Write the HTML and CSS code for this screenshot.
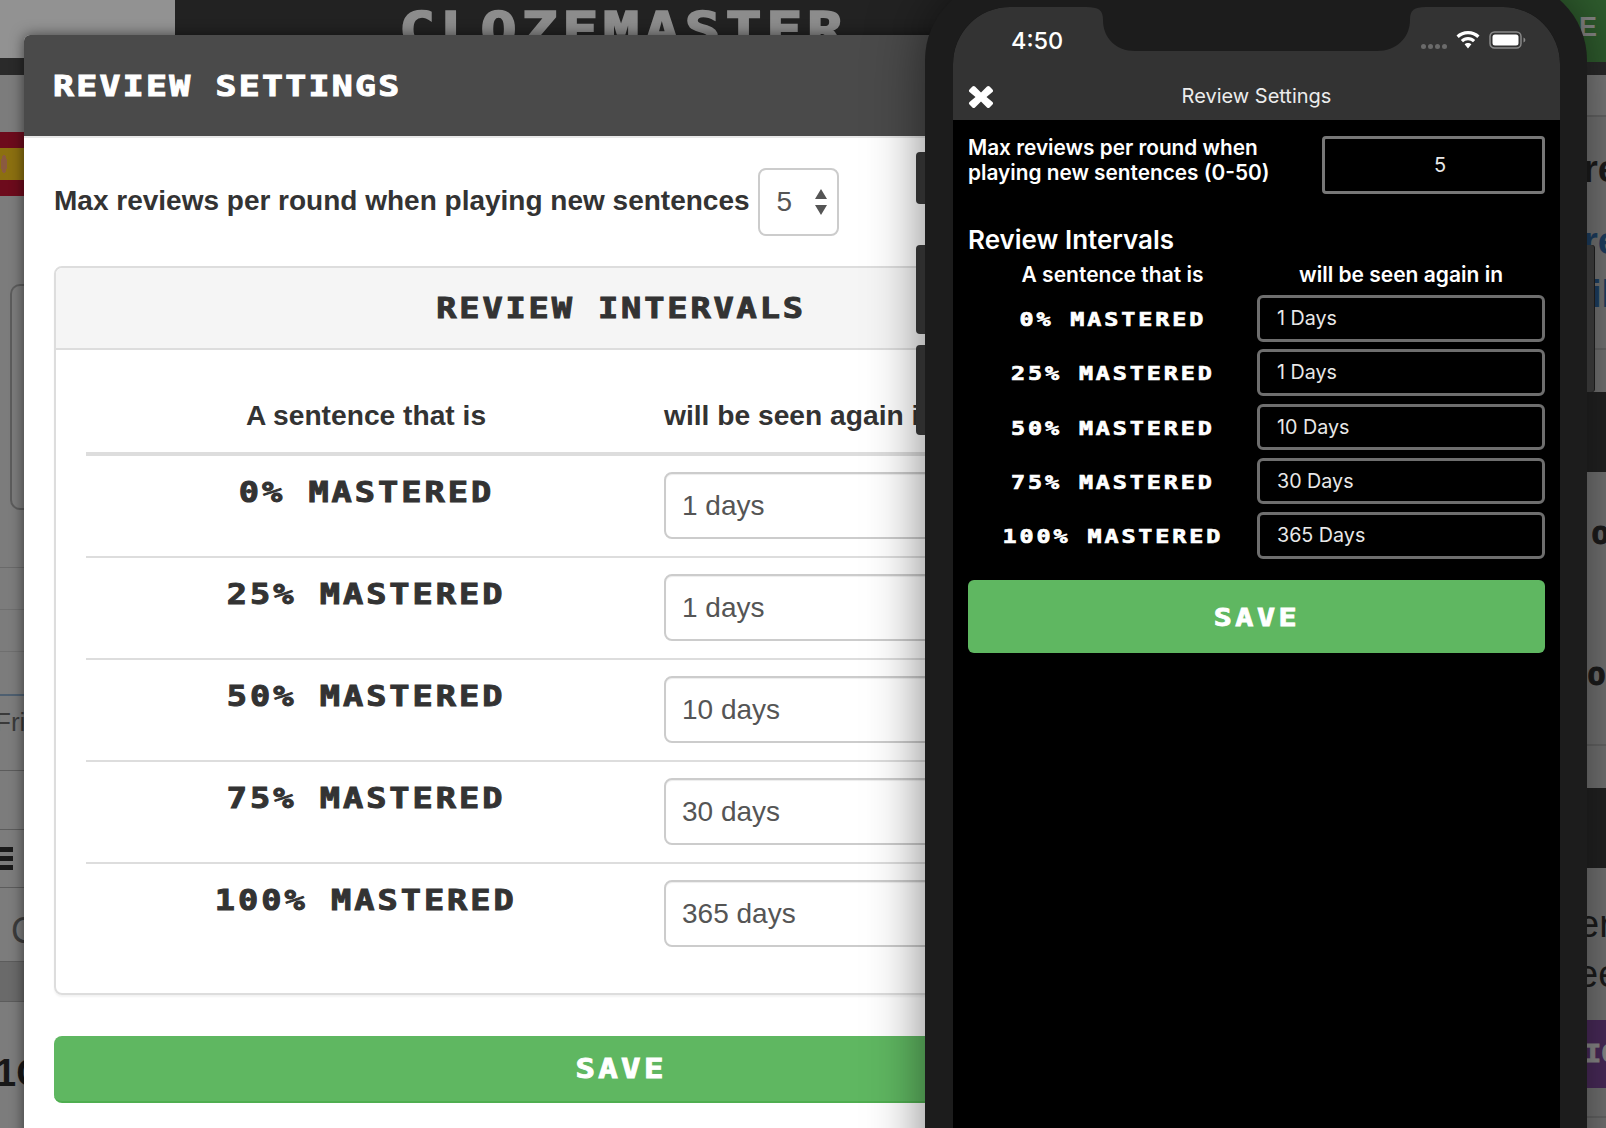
FILE: index.html
```html
<!DOCTYPE html>
<html lang="en">
<head>
<meta charset="utf-8">
<title>Review Settings</title>
<link rel="stylesheet" href="styles.css">
</head>
<body>
<div class="scene">
  <div class="backdrop">
    <div class="bd-top">
      <div class="bd-corner"></div>
      <div class="bd-nav">
        <span class="bd-logo"><span class="px">CLOZEMASTER</span></span>
        <span class="bd-cta"><span class="bd-cta-text">E</span></span>
      </div>
    </div>
    <div class="bd-main">
      <div class="strip-left">
        <div class="flag"></div>
        <div class="left-box"></div>
        <div class="lb lb-a"></div>
        <div class="lb lb-a2"></div>
        <div class="lb lb-a2"></div>
        <div class="lb lb-a3"></div>
        <div class="lb lb-fri">Fri</div>
        <div class="lb lb-b"></div>
        <div class="lb lb-menu"><span class="burger"></span></div>
        <div class="lb lb-c">C</div>
        <div class="lb lb-d"></div>
        <div class="lb lb-e">1C</div>
      </div>
      <div class="strip-right">
        <div class="rb rb-a"></div>
        <div class="rb rb-re">re</div>
        <div class="rb rb-blue">re</div>
        <div class="rb rb-il">il</div>
        <div class="rb rb-dark"></div>
        <div class="rb rb-o1"><span class="px">O</span></div>
        <div class="rb rb-o2"><span class="px">O</span></div>
        <div class="rb rb-dark2"></div>
        <div class="rb rb-er">er</div>
        <div class="rb rb-ee">ee</div>
        <div class="rb rb-purple"><span class="px">IO</span></div>
        <div class="rb rb-end"></div>
      </div>
    </div>
  </div>

  <section class="modal">
    <header class="modal-head"><h1 class="modal-title"><span class="px">REVIEW SETTINGS</span></h1></header>
    <div class="modal-body">
      <div class="max-row">
        <span class="max-label">Max reviews per round when playing new sentences</span>
        <div class="select">
          <span>5</span>
          <svg class="select-arrows" width="14" height="26" viewBox="0 0 14 26"><path d="M7 0l6 10H1zM7 26l-6-10h12z" fill="#555"/></svg>
        </div>
      </div>
      <div class="panel">
        <div class="panel-head"><span class="px">REVIEW INTERVALS</span></div>
        <div class="panel-body">
          <div class="iv-row iv-head">
            <div class="iv-th iv-th-center">A sentence that is</div>
            <div class="iv-th">will be seen again in</div>
          </div>
          <div class="iv-row"><div class="iv-label"><span class="px">0% MASTERED</span></div><div class="iv-input">1 days</div></div>
          <div class="iv-row"><div class="iv-label"><span class="px">25% MASTERED</span></div><div class="iv-input">1 days</div></div>
          <div class="iv-row"><div class="iv-label"><span class="px">50% MASTERED</span></div><div class="iv-input">10 days</div></div>
          <div class="iv-row"><div class="iv-label"><span class="px">75% MASTERED</span></div><div class="iv-input">30 days</div></div>
          <div class="iv-row"><div class="iv-label"><span class="px">100% MASTERED</span></div><div class="iv-input">365 days</div></div>
        </div>
      </div>
      <div class="save"><span class="px">SAVE</span></div>
    </div>
  </section>

  <section class="phone">
    <span class="side side-1"></span>
    <span class="side side-2"></span>
    <span class="side side-3"></span>
    <span class="side side-r"></span>
    <div class="screen">
      <div class="app-head">
        <div class="status">
          <span class="time">4:50</span>
          <div class="status-icons">
            <span class="dots"><i></i><i></i><i></i><i></i></span>
            <svg width="24" height="18" viewBox="0 0 24 18"><path d="M12 0C7.500 0 3.400 1.700 .5 4.500l2.200 2.400C5.100 4.600 8.400 3.200 12 3.200s6.900 1.400 9.300 3.700l2.200-2.400C20.600 1.700 16.500 0 12 0zM12 6c-2.800 0-5.300 1.100-7.200 2.900L7 11.300c1.300-1.200 3.100-2 5-2s3.700.8 5 2l2.200-2.400C17.300 7.100 14.800 6 12 6zM12 12c-1.300 0-2.500.5-3.400 1.300L12 17.500l3.400-4.200C14.500 12.500 13.300 12 12 12z" fill="#fff"/></svg>
            <svg width="37" height="18" viewBox="0 0 37 18"><rect x="1" y="1" width="31" height="16" rx="4.500" fill="none" stroke="#8a8a8a" stroke-width="1.500"/><rect x="3.500" y="3.500" width="26" height="11" rx="2.500" fill="#fff"/><path d="M34.500 6.500c1.200.4 1.800 1.300 1.800 2.500s-.6 2.100-1.800 2.500z" fill="#8a8a8a"/></svg>
          </div>
        </div>
        <div class="nav">
          <svg class="close" width="26" height="24" viewBox="0 0 26 24"><path d="M7 1.500L13 7.500l6-6c.8-.8 1.800-.8 2.600 0l2.900 2.900c.8.8.8 1.800 0 2.600L18.500 12l6 5c.8.800.8 1.800 0 2.600l-2.900 2.900c-.8.800-1.800.8-2.600 0l-6-6-6 6c-.8.800-1.800.8-2.600 0l-2.900-2.900c-.8-.8-.8-1.800 0-2.600l6-5-6-5c-.8-.8-.8-1.800 0-2.600l2.900-2.900c.8-.8 1.800-.8 2.600 0z" fill="#fff"/></svg>
          <span class="nav-title">Review Settings</span>
        </div>
      </div>
      <div class="app-body">
        <div class="app-max">
          <div class="app-max-label">Max reviews per round when playing new sentences (0-50)</div>
          <div class="app-max-input">5</div>
        </div>
        <h2 class="app-h2">Review Intervals</h2>
        <div class="app-row app-cols">
          <div class="app-col">A sentence that is</div>
          <div class="app-col">will be seen again in</div>
        </div>
        <div class="app-rows">
          <div class="app-row"><div class="app-label"><span class="px">0% MASTERED</span></div><div class="app-input">1 Days</div></div>
          <div class="app-row"><div class="app-label"><span class="px">25% MASTERED</span></div><div class="app-input">1 Days</div></div>
          <div class="app-row"><div class="app-label"><span class="px">50% MASTERED</span></div><div class="app-input">10 Days</div></div>
          <div class="app-row"><div class="app-label"><span class="px">75% MASTERED</span></div><div class="app-input">30 Days</div></div>
          <div class="app-row"><div class="app-label"><span class="px">100% MASTERED</span></div><div class="app-input">365 Days</div></div>
        </div>
        <div class="app-save"><span class="px">SAVE</span></div>
      </div>
    </div>
    <svg class="notch" width="340" height="58" viewBox="0 0 340 58"><path d="M0 7C13 7 17 10 17 20C17 38 30 51 49 51H291C310 51 324 38 324 20C324 10 328 7 340 7V0H0Z" fill="#1c1c1c"/></svg>
  </section>
</div>
</body>
</html>
```
FILE: styles.css
```css
* { box-sizing: border-box; }
html, body { margin: 0; padding: 0; background: #808080; }
h1, h2 { margin: 0; font: inherit; }

.scene {
  position: relative;
  width: 1606px;
  height: 1128px;
  overflow: hidden;
  font-family: "Liberation Sans", Arial, sans-serif;
}

/* stand-in for the retro pixel face: wide heavy monospace */
.px {
  display: inline-block;
  font-family: "DejaVu Sans Mono", monospace;
  font-weight: 700;
  white-space: pre;
  transform: scaleX(1.2);
  -webkit-text-stroke: .035em currentColor;
}

/* ---- dimmed page behind the windows ---- */
.backdrop {
  position: absolute;
  inset: 0;
  display: flex;
  flex-direction: column;
  background: #7c7c7c;
}
.bd-top {
  display: flex;
  height: 75px;
  flex: none;
  background: #2a2a2a;
}
.bd-corner { width: 175px; height: 58px; background: #929292; }
.bd-nav {
  flex: 1;
  height: 62px;
  display: flex;
  justify-content: space-between;
  background: #222;
}
.bd-logo {
  width: 1200px;
  padding-left: 224px;
  height: 35px;
  overflow: hidden;
  color: #8c8c8c;
  line-height: 60px;
}
.bd-logo .px { font-size: 50px; letter-spacing: 3.900px; transform-origin: left center; }
.bd-cta {
  width: 56px;
  background: #2f5d2e;
  padding: 13px 0 0 29px;
}
.bd-cta-text { color: #8a8a8a; font-size: 27px; font-weight: 700; line-height: 28px; }

.bd-main { flex: 1; display: flex; justify-content: space-between; }
.strip-left { width: 24px; display: flex; flex-direction: column; overflow: hidden; }
.strip-right { width: 19px; display: flex; flex-direction: column; overflow: hidden; background: #747474; }

.flag {
  flex: none;
  height: 64px;
  margin-top: 57px;
  background:
    radial-gradient(ellipse 3px 9px at 4px 32px, #8a5a40 0 100%, transparent 100%),
    linear-gradient(#6d0b1c 0 25%, #8c7010 25% 75%, #6d0b1c 75%);
}
.left-box {
  flex: none;
  height: 226px;
  margin: 88px 0 0 10px;
  border: 2px solid #5c5c5c;
  border-right: 0;
  border-radius: 10px 0 0 10px;
}
.lb { flex: none; color: #242424; white-space: nowrap; }
.lb-a { height: 58px; border-bottom: 1px solid #6a6a6a; }
.lb-a2 { height: 42px; border-bottom: 1px solid #6f6f6f; }
.lb-a3 { height: 42px; }
.lb-fri {
  height: 76px;
  padding-top: 11px;
  margin-left: -5px;
  border-top: 2px solid #4e5f70;
  font-size: 26px;
  line-height: 30px;
  color: #3a3a3a;
}
.lb-b { height: 60px; border-top: 1px solid #5c5c5c; border-bottom: 1px solid #5c5c5c; }
.lb-menu {
  height: 58px;
  padding-top: 17px;
  border-bottom: 1px solid #5c5c5c;
}
.burger {
  display: block;
  width: 13px;
  height: 23px;
  background: repeating-linear-gradient(#1a1a1a 0 5px, transparent 5px 9px);
}
.lb-c {
  height: 74px;
  padding: 25px 0 0 11px;
  font-size: 36px;
  line-height: 36px;
  color: #3c3c3c;
  border-bottom: 1px solid #5c5c5c;
}
.lb-d { height: 40px; background: #6a6a6a; border-bottom: 1px solid #5c5c5c; }
.lb-e {
  padding: 51px 0 0 0;
  margin-left: -5px;
  font-size: 38px;
  font-weight: 700;
  line-height: 40px;
  color: #181818;
}

.rb { flex: none; white-space: nowrap; color: #1c1c1c; font-size: 38px; line-height: 40px; }
.rb-a { height: 42px; border-bottom: 2px solid #666; background: #7a7a7a; }
.rb-re { height: 104px; padding-top: 32px; margin-left: -4px; font-weight: 700; }
.rb-blue { height: 47px; margin-left: -4px; color: #1d3f62; font-weight: 700; }
.rb-il { height: 82px; padding: 6px 0 0 4px; color: #1d3f62; font-weight: 700; border-bottom: 2px solid #666; }
.rb-dark { height: 80px; margin-top: 42px; background: #222; }
.rb-o1 { height: 156px; padding: 49px 0 0 6px; font-size: 25px; line-height: 28px; }
.rb-o2 { height: 118px; padding: 34px 0 0 2px; font-size: 25px; line-height: 28px; border-bottom: 2px solid #666; }
.rb-dark2 { height: 80px; margin-top: 42px; background: #222; }
.rb-er { height: 86px; margin-left: -9px; padding-top: 36px; }
.rb-ee { height: 66px; margin-left: -10px; }
.rb-purple {
  height: 68px;
  background: #4b2b5c;
  color: #8d8d8d;
  font-size: 24px;
  line-height: 68px;
  margin-left: -6px;
  padding-left: 6px;
}
.rb-end { height: 30px; border-bottom: 2px solid #666; }

/* ---- desktop modal ---- */
.modal {
  position: absolute;
  left: 24px;
  top: 35px;
  width: 1194px;
  background: #fff;
  border-radius: 6px 6px 0 0;
  box-shadow: 0 0 14px rgba(0, 0, 0, .55);
  color: #333;
}
.modal-head {
  height: 103px;
  padding: 34px 30px 0 29px;
  background: #4a4a4a;
  border-bottom: 2px solid #e8e8e8;
  border-radius: 6px 6px 0 0;
}
.modal-title { color: #fff; font-size: 29px; line-height: 34px; }
.modal-title .px { letter-spacing: 1.900px; transform-origin: left center; }
.modal-body { padding: 30px 30px 60px; }

.max-row { display: flex; align-items: center; gap: 8px; }
.max-label { padding-top: 1px; padding-bottom: 3px; font-size: 28px; font-weight: 700; white-space: nowrap; }
.select {
  width: 81px;
  height: 68px;
  display: flex;
  align-items: center;
  justify-content: space-between;
  padding: 0 9px 0 17px;
  border: 2px solid #ccc;
  border-radius: 8px;
  color: #555;
  font-size: 28px;
}

.panel {
  margin-top: 30px;
  height: 729px;
  border: 2px solid #ddd;
  border-radius: 8px;
  box-shadow: 0 2px 2px rgba(0, 0, 0, .05);
}
.panel-head {
  height: 82px;
  background: #f5f5f5;
  border-bottom: 2px solid #ddd;
  border-radius: 6px 6px 0 0;
  text-align: center;
  font-size: 28px;
  line-height: 82px;
}
.panel-head .px { letter-spacing: 2.400px; }
.panel-body { padding: 0 30px; }

.iv-row {
  display: grid;
  grid-template-columns: 560px 1fr;
  column-gap: 18px;
  height: 102px;
  padding-top: 16px;
  border-bottom: 2px solid #ddd;
}
.iv-row:last-child { border-bottom: 0; }
.iv-head { height: 106px; padding-top: 48px; border-bottom: 4px solid #ddd; }
.iv-th { font-size: 28.200px; font-weight: 700; line-height: 34px; white-space: nowrap; }
.iv-th-center { text-align: center; }
.iv-label { text-align: center; font-size: 28px; line-height: 28px; padding-top: 7px; }
.iv-label .px { letter-spacing: 2.500px; }
.iv-input {
  height: 67px;
  padding: 0 16px;
  border: 2px solid #ccc;
  border-radius: 8px;
  box-shadow: inset 0 1px 1px rgba(0, 0, 0, .075);
  color: #555;
  font-size: 28px;
  line-height: 63px;
}
.save {
  margin-top: 41px;
  height: 67px;
  background: #5fb761;
  border-bottom: 2px solid #4fae50;
  border-radius: 8px;
  color: #fff;
  text-align: center;
  font-size: 27px;
  line-height: 65px;
}
.save .px { letter-spacing: 2.800px; }

/* ---- phone ---- */
.phone {
  position: absolute;
  left: 925px;
  top: -20px;
  width: 662px;
  height: 1300px;
  padding: 27px 27px 27px 28px;
  background: #1c1c1c;
  border-radius: 80px;
  box-shadow: 0 0 55px rgba(0, 0, 0, .5);
}
.side {
  position: absolute;
  left: -9px;
  width: 9px;
  background: #2e2e2e;
  border-radius: 4px 0 0 4px;
}
.side-1 { top: 172px; height: 52px; }
.side-2 { top: 265px; height: 89px; }
.side-3 { top: 365px; height: 90px; }
.side-r {
  left: auto;
  right: -7px;
  top: 265px;
  height: 147px;
  width: 7px;
  background: #333;
  border-radius: 0 3px 3px 0;
  box-shadow: 1px 0 0 #1a1a1a;
}
.notch { position: absolute; left: 161px; top: 20px; }

.screen {
  height: 100%;
  background: #000;
  border-radius: 57px;
  overflow: hidden;
  color: #fff;
  font-family: Inter, "Noto Sans", sans-serif;
}
.app-head { height: 113px; background: #333; }
.status { display: flex; justify-content: space-between; height: 65px; }
.time { padding: 20px 0 0 58px; font-size: 23.500px; font-weight: 500; line-height: 28px; }
.status-icons { display: flex; align-items: center; gap: 9px; padding: 16px 34px 0 0; height: 50px; }
.dots { display: flex; gap: 2px; margin-top: 13px; }
.dots i { width: 5px; height: 5px; border-radius: 50%; background: #6b6b6b; }
.nav { position: relative; height: 48px; text-align: center; }
.nav-title { font-size: 20px; line-height: 48px; color: #ececec; }
.close { position: absolute; left: 15px; top: 13px; }

.app-body { padding: 0 15px; }
.app-max { display: flex; justify-content: space-between; padding-top: 16px; }
.app-max-label { width: 325px; margin-top: -1px; font-size: 20.800px; font-weight: 600; line-height: 25px; }
.app-max-input {
  width: 223px;
  height: 58px;
  padding-left: 13px;
  border: 3px solid #777;
  border-radius: 4px;
  font-size: 20px;
  line-height: 52px;
  text-align: center;
  color: #e8e8e8;
}
.app-h2 { margin-top: 30px; font-size: 26px; font-weight: 600; line-height: 32px; }
.app-row { display: grid; grid-template-columns: 289px 288px; }
.app-cols { margin-top: 6px; line-height: 26px; text-align: center; font-size: 21px; font-weight: 600; }
.app-rows { display: flex; flex-direction: column; gap: 7.800px; margin-top: 7px; }
.app-label { height: 46.500px; text-align: center; font-size: 19.500px; line-height: 48px; overflow: visible; }
.app-label .px { letter-spacing: 2.400px; }
.app-input {
  height: 46.500px;
  padding-left: 17px;
  border: 3px solid #6e6e6e;
  border-radius: 6px;
  font-size: 19.700px;
  line-height: 41px;
  color: #e8e8e8;
}
.app-save {
  margin-top: 21px;
  height: 73px;
  background: #5fb761;
  border-radius: 6px;
  text-align: center;
  font-size: 25px;
  line-height: 75px;
}
.app-save .px { letter-spacing: 2.900px; }
```
